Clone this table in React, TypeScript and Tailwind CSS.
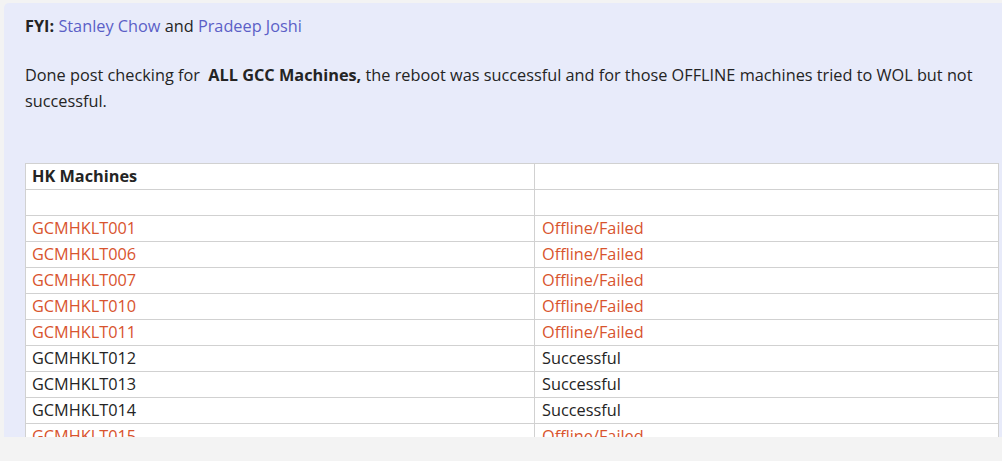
const rows: Array<{ name: string; status: string; failed: boolean }> = [
    { name: 'GCMHKLT001', status: 'Offline/Failed', failed: true },
    { name: 'GCMHKLT006', status: 'Offline/Failed', failed: true },
    { name: 'GCMHKLT007', status: 'Offline/Failed', failed: true },
    { name: 'GCMHKLT010', status: 'Offline/Failed', failed: true },
    { name: 'GCMHKLT011', status: 'Offline/Failed', failed: true },
    { name: 'GCMHKLT012', status: 'Successful', failed: false },
    { name: 'GCMHKLT013', status: 'Successful', failed: false },
    { name: 'GCMHKLT014', status: 'Successful', failed: false },
    { name: 'GCMHKLT015', status: 'Offline/Failed', failed: true },
];

function Cell({ children, className = '' }: { children?: React.ReactNode; className?: string }) {
    return (
        <div className={`flex h-[26px] items-center border-r border-b border-[#d1d1d1] ${className}`}>
            {children}
        </div>
    );
}

export default function App() {
    return (
        <div className="h-[461px] w-[1002px] overflow-hidden bg-[#f3f3f3] font-['Open_Sans',sans-serif] text-[16.3px] text-[#242424]">
            <div className="h-[437px] overflow-hidden pt-[3px] pl-[4px]">
                <div className="h-[460px] w-[1010px] rounded-l-[5px] bg-[#e8ebfa] pt-[10px] pl-[21px]">
                    <div className="leading-[26px]">
                        <span className="font-bold">FYI:</span>{' '}
                        <span className="text-[#5b5fc7]">Stanley Chow</span> and{' '}
                        <span className="text-[#5b5fc7]">Pradeep Joshi</span>
                    </div>
                    <p className="mt-[23px] w-[950px] leading-[26px]">
                        Done post checking for&nbsp; <span className="font-bold">ALL GCC Machines,</span> the reboot was
                        successful and for those OFFLINE machines tried to WOL but not successful.
                    </p>
                    <div className="mt-[49px] w-[974px] border-t border-l border-[#d1d1d1] bg-white">
                        <div className="grid grid-cols-[509px_1fr]">
                            <Cell className="pl-[6px] font-bold">HK Machines</Cell>
                            <Cell />
                            <Cell />
                            <Cell />
                            {rows.map((r) => (
                                <>
                                    <Cell key={r.name} className={`pl-[6px] ${r.failed ? 'text-[#d8542e]' : ''}`}>
                                        {r.name}
                                    </Cell>
                                    <Cell key={r.name + 's'} className={`pl-[7px] ${r.failed ? 'text-[#d8542e]' : ''}`}>
                                        {r.status}
                                    </Cell>
                                </>
                            ))}
                        </div>
                    </div>
                </div>
            </div>
        </div>
    );
}
